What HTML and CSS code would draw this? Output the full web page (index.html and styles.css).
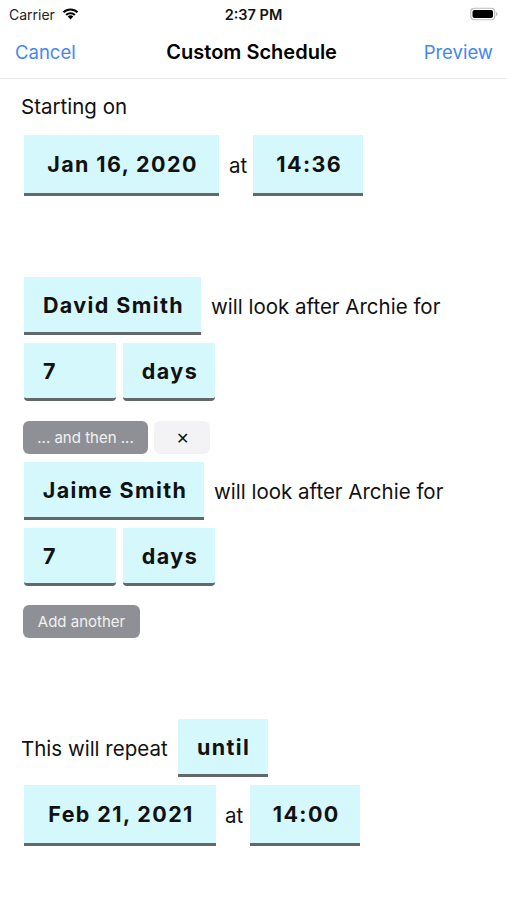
FILE: index.html
```html
<!DOCTYPE html>
<html>
<head>
<meta charset="utf-8">
<link rel="stylesheet" href="styles.css">
</head>
<body>
<div class="status">
  <div class="status-left">
    <span class="carrier">Carrier</span>
    <svg class="wifi" width="19" height="14" viewBox="0 0 18 14">
      <path d="M9 13.5 L6.2 10.6 A4 4 0 0 1 11.8 10.6 Z" fill="#000"/>
      <path d="M3.9 8.3 A7.3 7.3 0 0 1 14.1 8.3 L12.6 9.8 A5.2 5.2 0 0 0 5.4 9.8 Z" fill="#000"/>
      <path d="M1.2 5.6 A11.2 11.2 0 0 1 16.8 5.6 L15.3 7.1 A9.1 9.1 0 0 0 2.7 7.1 Z" fill="#000"/>
    </svg>
  </div>
  <div class="time">2:37 PM</div>
  <div class="status-right">
    <svg width="28" height="14" viewBox="0 0 28 14">
      <rect x="0.75" y="1.25" width="24" height="11.5" rx="3.5" fill="none" stroke="#bdbdbd" stroke-width="1.2"/>
      <rect x="2.5" y="3" width="20.5" height="8" rx="2" fill="#000"/>
      <path d="M26 5 Q27.6 5.3 27.6 7 Q27.6 8.7 26 9 Z" fill="#bdbdbd"/>
    </svg>
  </div>
</div>
<nav class="navbar">
  <span class="nav-btn">Cancel</span>
  <span class="nav-title">Custom Schedule</span>
  <span class="nav-btn">Preview</span>
</nav>
<main class="content">
  <div class="label">Starting on</div>
  <div class="row row-first">
    <div class="field w-date">Jan 16, 2020</div>
    <span class="at">at</span>
    <div class="field w-time">14:36</div>
  </div>

  <div class="row section">
    <div class="field field-mid w-david">David Smith</div>
    <span class="text">will look after Archie for</span>
  </div>
  <div class="row gap-s">
    <div class="field field-sm input">7</div>
    <div class="field field-sm picker">days</div>
  </div>
  <div class="row btns">
    <button class="gbtn then">... and then ...</button>
    <button class="xbtn">&#x2715;</button>
  </div>
  <div class="row gap-s">
    <div class="field field-mid w-jaime">Jaime Smith</div>
    <span class="text">will look after Archie for</span>
  </div>
  <div class="row gap-s">
    <div class="field field-sm input">7</div>
    <div class="field field-sm picker">days</div>
  </div>
  <div class="row btns2">
    <button class="gbtn add">Add another</button>
  </div>

  <div class="row section2">
    <span class="text lead">This will repeat</span>
    <div class="field field-mid w-until">until</div>
  </div>
  <div class="row gap-s">
    <div class="field w-date2">Feb 21, 2021</div>
    <span class="at at2">at</span>
    <div class="field w-time">14:00</div>
  </div>
</main>
</body>
</html>
```
FILE: styles.css
```css
* { box-sizing: border-box; }
html, body { margin: 0; padding: 0; background: #fff; }
body {
  width: 507px;
  height: 900px;
  font-family: Inter, "Liberation Sans", sans-serif;
  color: #111;
  overflow: hidden;
}
.status {
  height: 28px;
  display: flex;
  align-items: center;
  justify-content: space-between;
  padding: 0 9px 0 9px;
  position: relative;
}
.status-left { display: flex; align-items: center; gap: 6px; }
.carrier { font-size: 14px; color: #222; }
.wifi { margin-top: -2px; }
.time {
  position: absolute;
  left: 0; right: 0;
  text-align: center;
  font-size: 14.5px;
  font-weight: 600;
  pointer-events: none;
}
.status-right { display: flex; align-items: center; }
.navbar {
  height: 51px;
  display: flex;
  align-items: center;
  justify-content: space-between;
  padding: 0 14px 2px 15px;
  border-bottom: 1px solid #e6e6e6;
}
.nav-btn { font-size: 18.5px; color: #4287f5; }
.nav-title { font-size: 20px; font-weight: 600; color: #000; margin-left: 4px; }
.content { padding: 0 0 0 24px; }
.label { font-size: 20.5px; margin: 14px 0 0 -3px; line-height: 28px; }
.row { display: flex; align-items: center; }
.row-first { margin-top: 14px; }
.field {
  background: #d5f8fc;
  border-bottom: 3px solid #63686b;
  font-weight: 700;
  font-size: 21.5px;
  letter-spacing: 1.4px;
  color: #111;
  height: 61px;
  display: flex;
  align-items: center;
  justify-content: center;
  padding-left: 2px;
}
.field-mid { height: 58px; }
.field-sm { height: 58px; width: 92px; border-radius: 0 0 4px 4px; }
.field-sm.input { justify-content: flex-start; padding-left: 19px; }
.field-sm.picker { margin-left: 7px; }
.w-date { width: 195px; }
.w-date2 { width: 192px; }
.w-time { width: 110px; }
.w-david { width: 177px; }
.w-jaime { width: 180px; }
.w-until { width: 90px; }
.at { font-size: 20.5px; margin: 0 6px 0 10px; }
.at2 { margin: 0 7px 0 9px; }
.text { font-size: 20.5px; margin-left: 10px; }
.text.lead { margin: 0 10px 0 -3px; }
.section { margin-top: 81px; }
.section2 { margin-top: 81px; }
.gap-s { margin-top: 8px; }
.btns { margin-top: 20px; margin-left: -1px; gap: 6px; }
.btns2 { margin-top: 19px; margin-left: -1px; }
button { font-family: inherit; border: none; cursor: pointer; }
.gbtn {
  background: #8f9095;
  color: #f2f2f2;
  font-size: 15px;
  height: 33px;
  border-radius: 6px;
  padding: 0 0;
}
.then { width: 125px; }
.add { width: 117px; }
.xbtn {
  background: #f3f3f6;
  color: #111;
  width: 56px;
  height: 33px;
  border-radius: 6px;
  font-size: 16px;
  font-weight: 400;
}
```
